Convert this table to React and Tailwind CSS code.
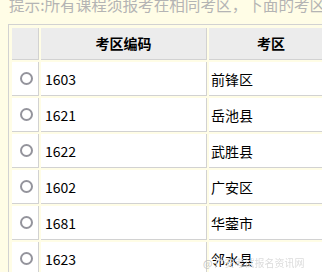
import React from "react";

const rows = [
  ["1603", "前锋区"],
  ["1621", "岳池县"],
  ["1622", "武胜县"],
  ["1602", "广安区"],
  ["1681", "华蓥市"],
  ["1623", "邻水县"],
];

export default function App() {
  return (
    <div
      className="relative w-[322px] h-[272px] overflow-hidden bg-[#fffde6]"
      style={{ fontFamily: '"Noto Sans CJK SC", "Liberation Sans", sans-serif' }}
    >
      <div className="pl-[9px] -mt-[7px] h-[31px] text-[15.6px] leading-[22px] text-[#b4b4b4] whitespace-nowrap">
        提示:所有课程须报考在相同考区，下面的考区
      </div>
      <table className="ml-[8px] border border-[#d2d2d2] border-separate border-spacing-[2px] p-[1px] w-[330px] table-fixed">
        <colgroup>
          <col className="w-[27px]" />
          <col className="w-[166px]" />
          <col className="w-[125px]" />
        </colgroup>
        <thead>
          <tr className="h-[32px]">
            <th className="bg-[#ececec] border-r border-b border-[#d2d2d2]"></th>
            <th className="bg-[#ececec] border-r border-b border-[#d2d2d2] text-[14px] font-bold text-black">考区编码</th>
            <th className="bg-[#ececec] border-r border-b border-[#d2d2d2] text-[14px] font-bold text-black">考区</th>
          </tr>
        </thead>
        <tbody>
          {rows.map(([code, name]) => (
            <tr key={code} className="h-[34px]">
              <td className="bg-white border-r border-b border-[#d2d2d2] pl-[8px] align-middle">
                <div className="w-[13px] h-[13px] rounded-full border-2 border-[#94949c] bg-white"></div>
              </td>
              <td className="bg-white border-r border-b border-[#d2d2d2] pl-[4px] text-[14px] leading-[18px] text-black align-middle">{code}</td>
              <td className="bg-white border-r border-b border-[#d2d2d2] pl-[2px] text-[14px] leading-[18px] text-black align-middle">{name}</td>
            </tr>
          ))}
        </tbody>
      </table>
      <div className="absolute left-[203px] top-[257px] flex items-center gap-[2px] text-[10px] leading-[12px] whitespace-nowrap">
        <span className="text-[#c4c4c4]">@</span>
        <span className="text-[#dcdcdc] blur-[0.6px]">广安考试报名资讯网</span>
      </div>
    </div>
  );
}
